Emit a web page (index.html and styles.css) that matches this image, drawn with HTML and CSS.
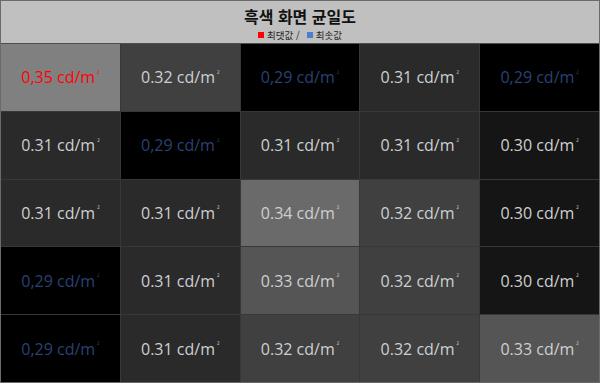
FILE: index.html
```html
<!DOCTYPE html>
<html lang="ko">
<head>
<meta charset="utf-8">
<title>흑색 화면 균일도</title>
<link rel="stylesheet" href="styles.css">
</head>
<body>
<div class="panel">
  <header class="head">
    <h1 class="title">흑색 화면 균일도</h1>
    <div class="legend">
      <span class="sq sq-max"></span><span>최댓값 /</span>
      <span class="sq sq-min"></span><span>최솟값</span>
    </div>
  </header>
  <div class="grid">
    <div class="cell l35 max">0,35 cd/m<sup>²</sup></div>
    <div class="cell l32">0.32 cd/m<sup>²</sup></div>
    <div class="cell l29 min">0,29 cd/m<sup>²</sup></div>
    <div class="cell l31">0.31 cd/m<sup>²</sup></div>
    <div class="cell l29 min">0,29 cd/m<sup>²</sup></div>

    <div class="cell l31">0.31 cd/m<sup>²</sup></div>
    <div class="cell l29 min">0,29 cd/m<sup>²</sup></div>
    <div class="cell l31">0.31 cd/m<sup>²</sup></div>
    <div class="cell l31">0.31 cd/m<sup>²</sup></div>
    <div class="cell l30">0.30 cd/m<sup>²</sup></div>

    <div class="cell l31">0.31 cd/m<sup>²</sup></div>
    <div class="cell l31">0.31 cd/m<sup>²</sup></div>
    <div class="cell l34">0.34 cd/m<sup>²</sup></div>
    <div class="cell l32">0.32 cd/m<sup>²</sup></div>
    <div class="cell l30">0.30 cd/m<sup>²</sup></div>

    <div class="cell l29 min">0,29 cd/m<sup>²</sup></div>
    <div class="cell l31">0.31 cd/m<sup>²</sup></div>
    <div class="cell l33">0.33 cd/m<sup>²</sup></div>
    <div class="cell l32">0.32 cd/m<sup>²</sup></div>
    <div class="cell l30">0.30 cd/m<sup>²</sup></div>

    <div class="cell l29 min">0,29 cd/m<sup>²</sup></div>
    <div class="cell l31">0.31 cd/m<sup>²</sup></div>
    <div class="cell l32">0.32 cd/m<sup>²</sup></div>
    <div class="cell l32">0.32 cd/m<sup>²</sup></div>
    <div class="cell l33">0.33 cd/m<sup>²</sup></div>
  </div>
</div>
</body>
</html>
```
FILE: styles.css
```css
html, body {
  margin: 0;
  padding: 0;
  background: #ffffff;
}

.panel {
  width: 600px;
  height: 383px;
  box-sizing: border-box;
  border: 1px solid #6a6a6a;
  display: flex;
  flex-direction: column;
  font-family: "Open Sans", "Noto Sans CJK KR", sans-serif;
}

.head {
  height: 43px;
  flex: none;
  background: #c0c0c0;
  border-bottom: 1px solid #4e4e4e;
  display: flex;
  flex-direction: column;
  align-items: center;
  padding-top: 4px;
  box-sizing: border-box;
}

.title {
  margin: 0;
  font-family: "Noto Sans CJK KR", sans-serif;
  font-weight: 700;
  font-size: 16px;
  line-height: 23px;
  color: #111111;
}

.legend {
  display: flex;
  align-items: center;
  gap: 3px;
  font-family: "Noto Sans CJK KR", sans-serif;
  font-size: 9.5px;
  line-height: 14px;
  color: #222222;
}

.sq {
  width: 6px;
  height: 6px;
  display: inline-block;
  margin-left: 4px;
}

.sq-max { background: #ff0000; margin-left: 0; }
.sq-min { background: #4a7fd0; }

.grid {
  flex: 1;
  display: grid;
  grid-template-columns: repeat(5, 1fr);
  grid-template-rows: repeat(5, 1fr);
  gap: 1px;
  background: #383838;
}

.cell {
  display: flex;
  align-items: center;
  justify-content: center;
  font-size: 16px;
  color: #cdd0d2;
  white-space: nowrap;
}

.cell sup {
  font-size: 7px;
  vertical-align: top;
  position: relative;
  top: -3px;
  margin-left: 2px;
}

.l35 { background: #808080; }
.l34 { background: #6a6a6a; }
.l33 { background: #555555; }
.l32 { background: #404040; }
.l31 { background: #2a2a2a; }
.l30 { background: #151515; }
.l29 { background: #000000; }

.max { color: #ff0000; }
.min { color: #2a4274; }
```
